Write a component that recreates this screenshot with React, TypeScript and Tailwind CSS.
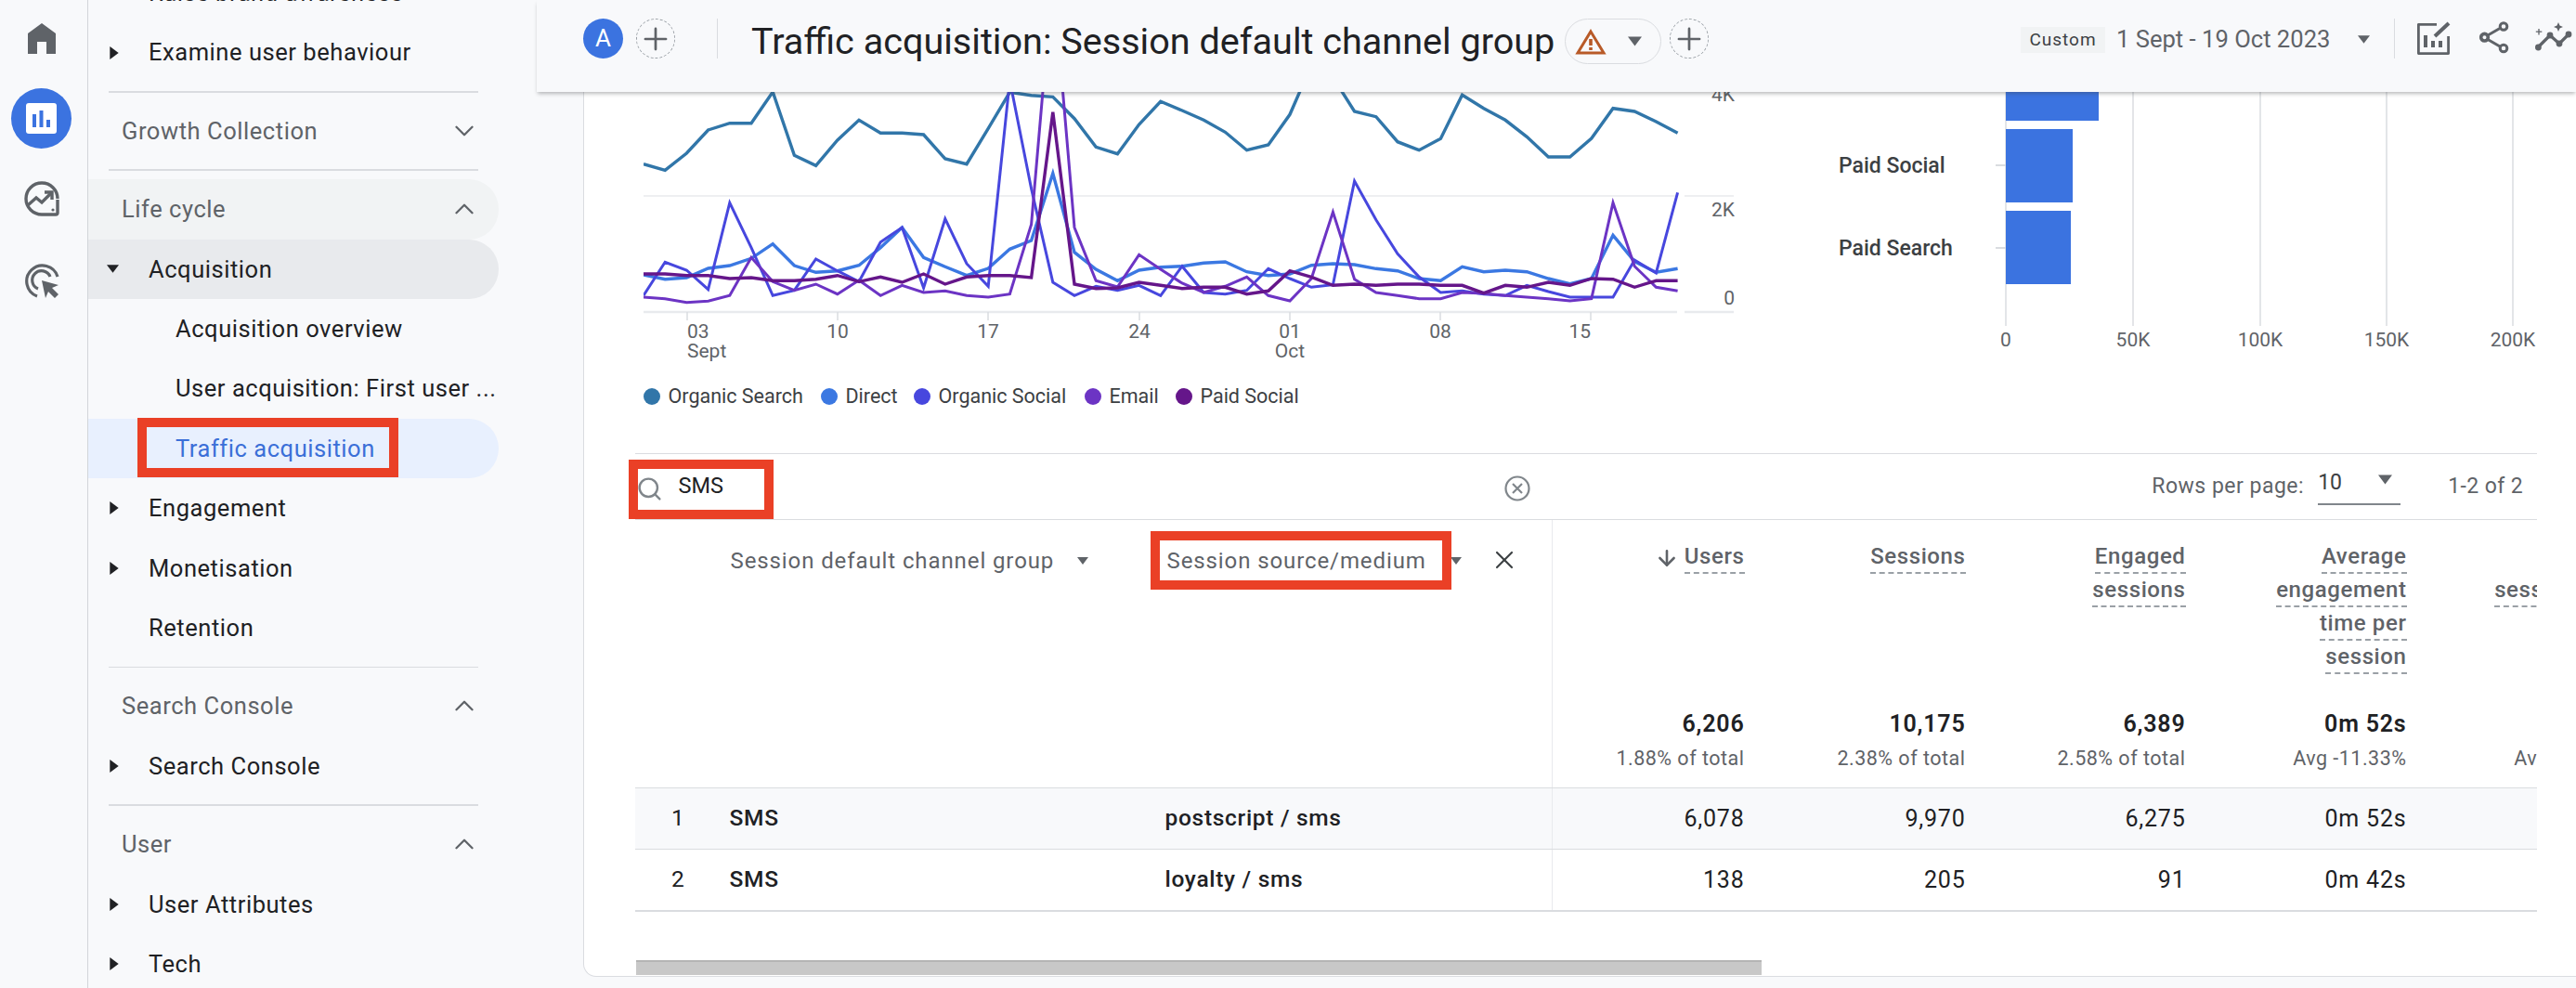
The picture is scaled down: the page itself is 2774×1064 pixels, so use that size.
import React from "react";
import { Plus, Search, X, ChevronDown, ChevronUp, ArrowDown } from "lucide-react";

const series: { color: string; w: number; z: number[] }[] = [
  { color: "#3176a9", w: 3.4, z: [260,280,225,150,128,128,27,232,265,183,118,160,160,165,243,260,145,28,38,43,113,205,227,132,58,87,118,157,215,198,100,-60,-20,90,107,188,215,178,37,80,118,172,237,237,177,80,90,123,160] },
  { color: "#3b78e2", w: 3.4, z: [618,632,627,597,588,565,518,588,610,605,587,530,465,562,592,620,597,535,507,290,545,600,637,603,593,590,580,576,608,620,615,587,582,585,598,605,630,637,592,608,603,608,630,647,630,490,575,610,598] },
  { color: "#4747de", w: 3, z: [685,577,603,665,385,530,685,668,567,605,640,512,465,660,437,582,655,-10,340,642,685,655,668,652,685,590,675,680,668,598,630,658,650,315,440,550,625,675,670,680,685,652,672,690,690,690,570,612,352] },
  { color: "#6c34c4", w: 3, z: [690,695,707,703,685,562,640,668,648,680,635,685,652,675,670,685,690,680,455,-350,465,637,657,553,600,645,675,655,625,685,702,630,415,632,675,685,695,695,675,678,685,690,695,702,695,385,590,658,670] },
  { color: "#65168a", w: 3.4, z: [615,615,620,620,630,627,637,637,632,620,640,625,642,615,648,625,620,620,627,92,648,662,660,642,652,662,658,658,680,670,605,625,652,648,652,648,648,652,652,677,652,658,642,652,630,632,658,637,637] },
];

const points = (z: number[]) => z.map((v, i) => `${(693 + 23.2 * i).toFixed(1)},${(90 + v / 3).toFixed(1)}`).join(" ");

const Tri = ({ dir = "down", color = "#5f6368", size = 12 }: { dir?: "down" | "right"; color?: string; size?: number }) => (
  <svg width={size} height={size} viewBox="0 0 12 12" className="shrink-0">
    {dir === "down" ? <path d="M0 2h12L6 10z" fill={color} /> : <path d="M2 0l8 6-8 6z" fill={color} />}
  </svg>
);

const Divider = () => <div className="mx-[22px] my-[9.25px] h-[1.5px] w-[398px] bg-[#dadce0]" />;

const Head = ({ label, open, bg = "" }: { label: string; open: boolean; bg?: string }) => (
  <div className={`flex h-[64.4px] w-[442px] shrink-0 items-center rounded-r-[32px] pl-[36px] pr-[20px] text-[#5f6368] ${bg}`}>
    <span className="flex-1">{label}</span>
    {open ? <ChevronUp size={34} strokeWidth={1.6} color="#5f6368" /> : <ChevronDown size={34} strokeWidth={1.6} color="#5f6368" />}
  </div>
);

const Item = ({ label, tri, bg = "" }: { label: string; tri?: "down" | "right"; bg?: string }) => (
  <div className={`flex h-[64.4px] w-[442px] shrink-0 items-center rounded-r-[32px] text-[#202124] ${bg}`}>
    <span className={`flex w-[65px] shrink-0 justify-start ${tri === "down" ? "pl-[20px]" : "pl-[21px]"}`}>{tri && <Tri dir={tri} color="#202124" size={tri === "down" ? 13 : 14} />}</span>
    <span>{label}</span>
  </div>
);

const Sub = ({ label, children, cls = "text-[#202124]" }: { label: string; children?: React.ReactNode; cls?: string }) => (
  <div className={`relative flex h-[64.4px] w-[442px] shrink-0 items-center rounded-r-[32px] pl-[94px] ${cls}`}>
    <span className="whitespace-nowrap">{label}</span>
    {children}
  </div>
);

const Rail = () => (
  <div className="flex w-[95px] shrink-0 flex-col items-center border-r-[1.5px] border-[#d2d5d9] bg-[#f8f9fb] pr-[5px]">
    <svg width="30" height="34" viewBox="0 0 30 34" className="mt-[25px]">
      <path d="M15 0L30 11V33H20V20H10V33H0V11Z" fill="#5f6368" />
    </svg>
    <div className="mt-[36px] flex h-[65px] w-[65px] shrink-0 items-center justify-center rounded-full bg-[#3b73e0]">
      <svg width="33" height="33" viewBox="0 0 33 33">
        <rect width="33" height="33" rx="3" fill="#fff" />
        <rect x="7" y="12" width="4" height="14" fill="#3b73e0" />
        <rect x="14.5" y="8" width="4" height="18" fill="#3b73e0" />
        <rect x="22" y="18" width="4" height="8" fill="#3b73e0" />
      </svg>
    </div>
    <svg width="38" height="38" viewBox="0 0 38 38" className="mt-[35px]" fill="none" stroke="#5f6368">
      <path d="M36 20V34a2 2 0 0 1-2 2H19A17 17 0 1 1 36 19" strokeWidth="3.4" />
      <path d="M4 26l9-8 6 5 10-10" strokeWidth="3.4" />
      <path d="M22 12h8v8" strokeWidth="3.4" />
      <circle cx="31" cy="31" r="1.6" fill="#5f6368" stroke="none" />
    </svg>
    <svg width="38" height="38" viewBox="0 0 38 38" className="mt-[51px]" fill="none" stroke="#5f6368">
      <path d="M14 35A17 17 0 1 1 36 14" strokeWidth="3.2" />
      <path d="M15 27A10 10 0 1 1 28 14" strokeWidth="3.2" />
      <path d="M19 18L37 23l-7 3 7 7-4 4-7-7-3 7z" fill="#5f6368" stroke="none" />
    </svg>
  </div>
);

const Sidebar = () => (
  <div className="w-[533px] shrink-0 overflow-hidden bg-[#f8f9fb] font-['Roboto',sans-serif] text-[25.5px] tracking-[0.55px]">
    <div className="-mt-[40px] flex flex-col">
      <Item label="Raise brand awareness" tri="right" />
      <Item label="Examine user behaviour" tri="right" />
      <Divider />
      <Head label="Growth Collection" open={false} />
      <Divider />
      <Head label="Life cycle" open bg="bg-[#f1f3f4]" />
      <Item label="Acquisition" tri="down" bg="bg-[#e8eaed]" />
      <Sub label="Acquisition overview" />
      <Sub label="User acquisition: First user ..." />
      <Sub label="Traffic acquisition" cls="bg-[#e8f0fe] text-[#3b6fd8]">
        <div className="absolute left-[53px] top-[-1px] h-[64px] w-[281px] border-[10px] border-[#ea4026]" />
      </Sub>
      <Item label="Engagement" tri="right" />
      <Item label="Monetisation" tri="right" />
      <Item label="Retention" />
      <Divider />
      <Head label="Search Console" open />
      <Item label="Search Console" tri="right" />
      <Divider />
      <Head label="User" open />
      <Item label="User Attributes" tri="right" />
      <Item label="Tech" tri="right" />
    </div>
  </div>
);

const CirclePlus = () => (
  <div className="flex h-[43px] w-[42px] shrink-0 items-center justify-center rounded-full border border-dashed border-[#9aa0a6]">
    <Plus size={38} strokeWidth={1.7} color="#5f6368" />
  </div>
);

const Header = () => (
  <div className="relative z-10 -ml-[50px] flex h-[99px] shrink-0 items-start bg-[#f8f9fb] pl-[50px] pt-[20px] font-['Roboto',sans-serif] shadow-[0_3px_4px_-1px_rgba(60,64,67,0.35)]">
    <div className="flex h-[43px] w-[43px] shrink-0 items-center justify-center rounded-full bg-[#3b73e0] text-[26px] text-white">A</div>
    <div className="ml-[14px]"><CirclePlus /></div>
    <div className="ml-[45px] h-[43px] w-px bg-[#dadce0]" />
    <div className="ml-[36px] w-[876px] whitespace-nowrap text-[39.6px] leading-[50px] text-[#202124]">Traffic acquisition: Session default channel group</div>
    <div className="flex h-[49px] w-[104px] shrink-0 items-center rounded-full border border-[#dadce0] pl-[10px]">
      <svg width="34" height="30" viewBox="0 0 34 30" fill="none">
        <path d="M17 4L31 27H3Z" stroke="#b85a28" strokeWidth="3" />
        <path d="M17 12v7M17 21v3" stroke="#b85a28" strokeWidth="3.6" />
      </svg>
      <span className="ml-[23px]"><Tri size={15} /></span>
    </div>
    <div className="ml-[9px]"><CirclePlus /></div>
    <div className="ml-[336px] mt-[9px] flex h-[28px] w-[91px] shrink-0 items-center justify-center bg-[#f1f3f4] text-[19px] tracking-[1px] text-[#3c4043]">Custom</div>
    <div className="ml-[12px] mt-[3px] w-[260px] whitespace-nowrap text-[25.6px] leading-[38px] text-[#5f6368]">1 Sept - 19 Oct 2023</div>
    <span className="mt-[16px]"><Tri size={13} /></span>
    <div className="ml-[26px] h-[43px] w-px bg-[#dadce0]" />
    <svg width="37" height="36" viewBox="0 0 37 36" fill="none" className="ml-[23px] mt-[3px]" stroke="#5f6368">
      <path d="M22 3.4H2.4V34.6H34.6V16" strokeWidth="2.8" strokeLinejoin="round" />
      <path d="M10 28V15M18 28V21M26 28V21" strokeWidth="4" />
      <path d="M20 16L35 2" strokeWidth="4" />
    </svg>
    <svg width="33" height="35" viewBox="0 0 33 35" fill="none" className="ml-[31px] mt-[3px]" stroke="#5f6368">
      <path d="M9 15L22 7.5M9 19.5L22 27" strokeWidth="3" />
      <circle cx="26" cy="5.5" r="3.8" strokeWidth="3" />
      <circle cx="5.5" cy="17.2" r="3.8" strokeWidth="3.6" />
      <circle cx="26" cy="29" r="3.8" strokeWidth="3" />
    </svg>
    <svg width="40" height="33" viewBox="0 0 40 33" fill="none" className="ml-[27px] mt-[3px]">
      <path d="M3 28L16 15L26 24L36 14" stroke="#5f6368" strokeWidth="3.2" />
      <circle cx="3.4" cy="28" r="3.4" fill="#5f6368" />
      <circle cx="16" cy="15" r="3.4" fill="#5f6368" />
      <circle cx="26" cy="24" r="3.4" fill="#5f6368" />
      <circle cx="36" cy="14" r="3.4" fill="#5f6368" />
      <path d="M4 8v6.5M0.8 11.2h6.5" stroke="#5f6368" strokeWidth="1.3" />
      <path d="M25 1L26.5 4.5L30 6L26.5 7.5L25 11L23.5 7.5L20 6L23.5 4.5Z" fill="#5f6368" />
    </svg>
  </div>
);

const LineChart = () => (
  <svg width="1180" height="246" viewBox="693 99 1180 246" className="block">
    <line x1="693" y1="211" x2="1806" y2="211" stroke="#e8eaed" strokeWidth="1.5" />
    <line x1="1814" y1="211" x2="1867" y2="211" stroke="#e8eaed" strokeWidth="1.5" />
    <line x1="693" y1="336" x2="1806" y2="336" stroke="#e8eaed" strokeWidth="2.5" />
    <line x1="1814" y1="336" x2="1867" y2="336" stroke="#e8eaed" strokeWidth="2.5" />
    {[740, 902, 1064, 1227, 1389, 1551, 1713].map((x) => (
      <line key={x} x1={x} y1="336" x2={x} y2="345" stroke="#dadce0" strokeWidth="1.5" />
    ))}
    {series.map((s) => (
      <polyline key={s.color} points={points(s.z)} fill="none" stroke={s.color} strokeWidth={s.w} strokeLinejoin="miter" />
    ))}
    <g fontSize="21" fill="#5f6368" textAnchor="end">
      <text x="1868" y="109">4K</text>
      <text x="1868" y="233">2K</text>
      <text x="1868" y="328">0</text>
    </g>
  </svg>
);

const XLabels = () => (
  <svg width="1180" height="52" viewBox="693 345 1180 52" className="block">
    <g fontSize="21" fill="#5f6368">
      <text x="740" y="364">03</text>
      <text x="740" y="385">Sept</text>
      <text x="902" y="364" textAnchor="middle">10</text>
      <text x="1064" y="364" textAnchor="middle">17</text>
      <text x="1227" y="364" textAnchor="middle">24</text>
      <text x="1389" y="364" textAnchor="middle">01</text>
      <text x="1389" y="385" textAnchor="middle">Oct</text>
      <text x="1551" y="364" textAnchor="middle">08</text>
      <text x="1713" y="364" textAnchor="end">15</text>
    </g>
  </svg>
);

const legend = [
  { c: "#3176a9", t: "Organic Search", w: "w-[191px]" },
  { c: "#3b78e2", t: "Direct", w: "w-[100px]" },
  { c: "#4747de", t: "Organic Social", w: "w-[184px]" },
  { c: "#6c34c4", t: "Email", w: "w-[98px]" },
  { c: "#65168a", t: "Paid Social", w: "w-[134px]" },
];

const BarChart = () => (
  <svg width="760" height="290" viewBox="1975 99 760 290" className="block">
    {[2160, 2297, 2434, 2570, 2706].map((x) => (
      <line key={x} x1={x} y1="99" x2={x} y2="351" stroke="#dadce0" strokeWidth="1.5" />
    ))}
    <line x1="2149" y1="178" x2="2160" y2="178" stroke="#dadce0" strokeWidth="2" />
    <line x1="2149" y1="267" x2="2160" y2="267" stroke="#dadce0" strokeWidth="2" />
    <rect x="2160" y="90" width="100" height="40" fill="#3b73e0" />
    <rect x="2160" y="139" width="72" height="79" fill="#3b73e0" />
    <rect x="2160" y="227" width="70" height="79" fill="#3b73e0" />
    <g fontSize="23" fontWeight="500" fill="#3c4043">
      <text x="1980" y="186">Paid Social</text>
      <text x="1980" y="275">Paid Search</text>
    </g>
    <g fontSize="21" fill="#5f6368" textAnchor="middle">
      <text x="2160" y="373">0</text>
      <text x="2297" y="373">50K</text>
      <text x="2434" y="373">100K</text>
      <text x="2570" y="373">150K</text>
      <text x="2706" y="373">200K</text>
    </g>
  </svg>
);

const Dashed = ({ lines }: { lines: string[] }) => (
  <div className="flex flex-col items-end">
    {lines.map((l) => (
      <span key={l} className="h-[36px] whitespace-nowrap border-b-2 border-dashed border-[#9aa0a6] text-[24px] font-medium leading-[35px] tracking-[0.6px] text-[#5f6368]">{l}</span>
    ))}
  </div>
);

const columns = [
  { w: "w-[206.5px]", h: ["Users"], total: "6,206", sub: "1.88% of total", r1: "6,078", r2: "138", arrow: true },
  { w: "w-[238px]", h: ["Sessions"], total: "10,175", sub: "2.38% of total", r1: "9,970", r2: "205" },
  { w: "w-[237px]", h: ["Engaged", "sessions"], total: "6,389", sub: "2.58% of total", r1: "6,275", r2: "91" },
  { w: "w-[238px]", h: ["Average", "engagement", "time per", "session"], total: "0m 52s", sub: "Avg -11.33%", r1: "0m 52s", r2: "0m 42s" },
  { w: "w-[238px]", h: ["Engaged", "sessions per", "user"], total: "1.64", sub: "Avg -14.92%", r1: "1.64", r2: "1.49" },
];

const Table = () => (
  <div className="relative ml-[54.5px] mr-[42px] font-['Roboto',sans-serif]">
    <div className="overflow-hidden">
      {/* search row */}
      <div className="flex h-[72px] items-center border-y-[1.5px] border-[#dadce0] pl-[1px]">
        <Search size={29} strokeWidth={2} color="#80868b" className="mt-[5px] shrink-0" />
        <span className="ml-[17px] w-[47px] text-[23.5px] text-[#202124]">SMS</span>
        <svg width="28" height="28" viewBox="0 0 28 28" fill="none" stroke="#80868b" strokeWidth="2.2" className="ml-[842px] mt-[3px] shrink-0">
          <circle cx="14" cy="14" r="12.5" />
          <path d="M9 9l10 10M19 9L9 19" />
        </svg>
        <span className="ml-auto text-[23px] tracking-[0.5px] text-[#5f6368]">Rows per page:</span>
        <div className="ml-[15px] mt-[4px] flex h-[36px] w-[89px] items-start justify-between border-b-2 border-[#80868b] pr-[9px] text-[23px] leading-[24px] text-[#3c4043]">
          <span>10</span>
          <span className="mt-[1px]"><Tri size={15} /></span>
        </div>
        <span className="ml-[51px] mr-[15px] text-[23px] tracking-[0.4px] text-[#5f6368]">1-2 of 2</span>
      </div>
      {/* header */}
      <div className="flex h-[288px]">
        <div className="flex h-full w-[987px] shrink-0 items-start pt-[27px] text-[24px] tracking-[0.9px] text-[#5f6368]">
          <span className="ml-[103px] w-[373px] whitespace-nowrap leading-[34px]">Session default channel group</span>
          <span className="mt-[11px]"><Tri size={12} /></span>
          <span className="ml-[85px] w-[305px] whitespace-nowrap leading-[34px]">Session source/medium</span>
          <span className="mt-[11px]"><Tri size={12} /></span>
          <X size={32} strokeWidth={1.6} color="#3c4043" className="ml-[30px] shrink-0" />
        </div>
        <div className="h-full w-[1.5px] shrink-0 bg-[#e8eaed]" />
        {columns.map((c) => (
          <div key={c.total + c.w} className={`relative flex ${c.w} shrink-0 flex-col items-end pt-[22px]`}>
            <div className="flex h-[180px] shrink-0 items-start gap-[6px]">
              {c.arrow && <ArrowDown size={26} strokeWidth={2.4} color="#5f6368" className="mt-[6px]" />}
              <Dashed lines={c.h} />
            </div>
            <span className="h-[36px] whitespace-nowrap text-[25px] font-semibold leading-[36px] tracking-[0.8px] text-[#202124]">{c.total}</span>
            <span className="mt-[4px] whitespace-nowrap text-[21.5px] leading-[30px] tracking-[0.5px] text-[#5f6368]">{c.sub}</span>
          </div>
        ))}
      </div>
      {/* rows */}
      {[
        { n: "1", a: "postscript / sms", k: "r1" as const, bg: "bg-[#f8f9fb]" },
        { n: "2", a: "loyalty / sms", k: "r2" as const, bg: "" },
      ].map((r) => (
        <div key={r.n} className={`flex h-[66px] border-t-[1.5px] border-[#dadce0] ${r.bg}`}>
          <div className="flex w-[987px] shrink-0 items-center text-[24.5px] font-medium tracking-[0.7px] text-[#202124]">
            <span className="w-[54px] text-right font-normal">{r.n}</span>
            <span className="ml-[48px] w-[469px]">SMS</span>
            <span>{r.a}</span>
          </div>
          <div className="w-[1.5px] shrink-0 bg-[#e8eaed]" />
          {columns.map((c) => (
            <div key={c.total + c.w} className={`flex ${c.w} shrink-0 items-center justify-end text-[25px] tracking-[0.8px] text-[#202124]`}>{c[r.k]}</div>
          ))}
        </div>
      ))}
      <div className="h-[1.5px] bg-[#dadce0]" />
      {/* scrollbar */}
      <div className="mt-[52.5px] ml-[1px] h-[16px] w-[1212px] border-t-2 border-[#b5b5b5] bg-[#c8c8c8]" />
    </div>
    {/* annotation boxes */}
    <div className="absolute left-[-7px] top-[7px] h-[64px] w-[156px] border-[10px] border-[#ea4026]" />
    <div className="absolute left-[555px] top-[84px] h-[63px] w-[324px] border-[10px] border-[#ea4026]" />
  </div>
);

const Content = () => (
  <div className="mb-[12px] flex flex-1 flex-col overflow-hidden rounded-bl-[14px] border-b-[1.5px] border-l-[1.5px] border-[#dadce0] bg-white">
    <div className="flex h-[389px] shrink-0 font-['Roboto',sans-serif]">
      <div className="ml-[63.5px] flex w-[1180px] shrink-0 flex-col">
        <LineChart />
        <XLabels />
        <div className="mt-[14px] flex items-center text-[21.5px] text-[#3c4043]">
          {legend.map((l) => (
            <div key={l.t} className={`flex items-center ${l.w} shrink-0`}>
              <span className="h-[18px] w-[18px] rounded-full" style={{ backgroundColor: l.c }} />
              <span className="ml-[9px] whitespace-nowrap">{l.t}</span>
            </div>
          ))}
        </div>
      </div>
      <div className="ml-[102px]"><BarChart /></div>
    </div>
    <Table />
  </div>
);

export default function App() {
  return (
    <div className="flex h-[1064px] w-[2774px] overflow-hidden bg-[#f8f9fb]">
      <Rail />
      <Sidebar />
      <div className="flex min-w-0 flex-1 flex-col">
        <Header />
        <Content />
      </div>
    </div>
  );
}
